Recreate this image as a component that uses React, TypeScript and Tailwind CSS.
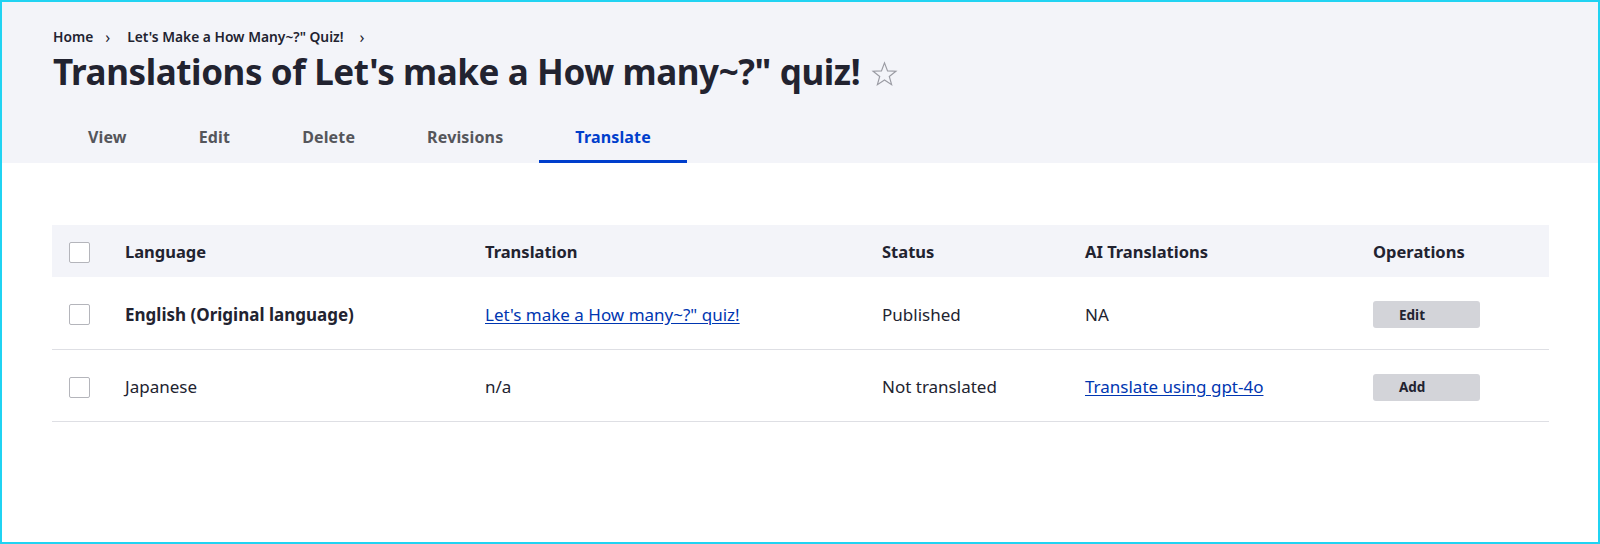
import React from "react";

const font = { fontFamily: '"Noto Sans", "Open Sans", sans-serif' };

function Checkbox() {
  return (
    <span className="block w-[21px] h-[21px] rounded-[2px] border border-[#b4b5bb] bg-white" />
  );
}

function Star() {
  return (
    <svg width="29" height="28" viewBox="0 0 24 24" className="ml-[10px] mt-[4px]">
      <polygon
        points="12,2.5 14.6,9.3 21.8,9.6 16.1,14.1 18.1,21.1 12,17.1 5.9,21.1 7.9,14.1 2.2,9.6 9.4,9.3"
        fill="none"
        stroke="#9a9ba3"
        strokeWidth="1"
        strokeLinejoin="miter"
      />
    </svg>
  );
}

const rowGrid = "grid grid-cols-[73px_360px_397px_203px_288px_1fr] items-center";

export default function App() {
  const tabs = ["View", "Edit", "Delete", "Revisions", "Translate"];
  return (
    <div style={font} className="w-[1600px] h-[544px] border-2 border-[#20d3f2] bg-white text-[#222330] overflow-hidden flex flex-col">
      <div className="bg-[#f3f4f9] h-[161px] shrink-0 pl-[51px] flex flex-col">
        <div className="flex items-center text-[13.8px] font-semibold mt-[26px] h-[18px]">
          <span>Home</span>
          <span className="ml-[12px] mr-[17px] text-[16px] font-normal">›</span>
          <span>Let's Make a How Many~?" Quiz!</span>
          <span className="ml-[16px] text-[16px] font-normal">›</span>
        </div>
        <div className="flex items-center mt-[2px] h-[48px]">
          <h1 className="text-[35px] font-bold leading-[48px] tracking-[-0.4px]">
            Translations of Let's make a How many~?" quiz!
          </h1>
          <Star />
        </div>
        <div className="flex mt-auto -ml-[1px]">
          {tabs.map((t) => {
            const active = t === "Translate";
            return (
              <div
                key={t}
                className={
                  "px-9 h-[40px] flex items-center text-[16px] tracking-[0.15px] font-bold border-b-[3px] " +
                  (active ? "text-[#003ecc] border-[#003ecc]" : "text-[#55565b] border-transparent")
                }
              >
                <span className="-mt-[9px]">{t}</span>
              </div>
            );
          })}
        </div>
      </div>

      <div className="pl-[50px] pr-[49px] pt-[62px]">
        <div className={rowGrid + " bg-[#f3f4f9] h-[52px] pt-[3px] text-[16.5px] font-bold"}>
          <div className="pl-[17px]"><Checkbox /></div>
          <div>Language</div>
          <div>Translation</div>
          <div>Status</div>
          <div>AI Translations</div>
          <div>Operations</div>
        </div>
        <div className={rowGrid + " h-[73px] pt-[3px] border-b border-[#dedfe4] text-[17px]"}>
          <div className="pl-[17px]"><Checkbox /></div>
          <div className="font-bold">English (Original language)</div>
          <div><a className="text-[#0036b1] underline underline-offset-2" href="#">Let's make a How many~?" quiz!</a></div>
          <div>Published</div>
          <div>NA</div>
          <div>
            <button className="w-[107px] h-[27px] rounded-[3px] bg-[#d3d4d9] text-left pl-[26px] text-[13.5px] font-bold text-[#222330]">Edit</button>
          </div>
        </div>
        <div className={rowGrid + " h-[72px] pt-[3px] border-b border-[#dedfe4] text-[17px]"}>
          <div className="pl-[17px]"><Checkbox /></div>
          <div>Japanese</div>
          <div>n/a</div>
          <div>Not translated</div>
          <div><a className="text-[#0036b1] underline underline-offset-2" href="#">Translate using gpt-4o</a></div>
          <div>
            <button className="w-[107px] h-[27px] rounded-[3px] bg-[#d3d4d9] text-left pl-[26px] text-[13.5px] font-bold text-[#222330]">Add</button>
          </div>
        </div>
      </div>
    </div>
  );
}
